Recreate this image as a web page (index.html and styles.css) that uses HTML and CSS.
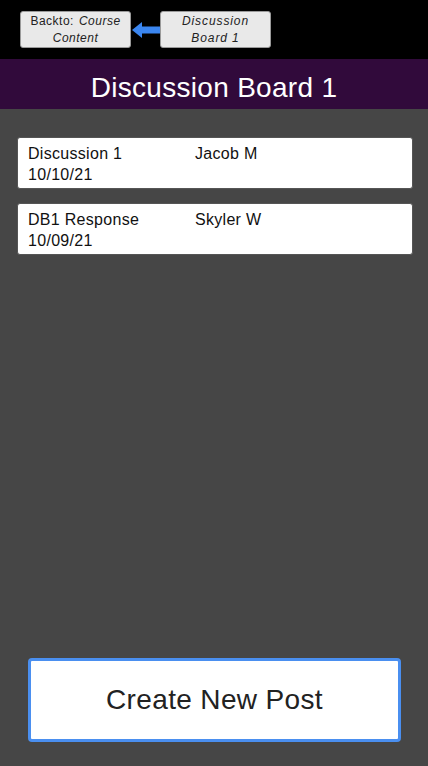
FILE: index.html
```html
<!DOCTYPE html>
<html>
<head>
<meta charset="utf-8">
<link rel="stylesheet" href="styles.css">
</head>
<body>
<div class="app">
  <header class="topbar">
    <div class="crumb crumb-back"><span>Backto:</span><i class="course">Course</i><br><i>Content</i></div>
    <svg class="arrow" width="29" height="18" viewBox="0 0 29 18"><path d="M0 9 L10 1 L10 5.5 L29 5.5 L29 12.5 L10 12.5 L10 17 Z" fill="#3b86f0"/></svg>
    <div class="crumb"><i>Discussion</i><br><i>Board 1</i></div>
  </header>
  <div class="titlebar">Discussion Board 1</div>
  <main class="content">
    <div class="card">
      <div class="row"><span class="name">Discussion 1</span><span>Jacob M</span></div>
      <div>10/10/21</div>
    </div>
    <div class="card">
      <div class="row"><span class="name">DB1 Response</span><span>Skyler W</span></div>
      <div>10/09/21</div>
    </div>
  </main>
  <div class="footer">
    <button class="create">Create New Post</button>
  </div>
</div>
</body>
</html>
```
FILE: styles.css
```css
html, body { margin: 0; padding: 0; }
body { font-family: "Liberation Sans", Arial, sans-serif; background: #464646; }
.app { width: 428px; height: 766px; display: flex; flex-direction: column; background: #464646; }
.topbar { height: 59px; background: #000; display: flex; align-items: flex-start; padding: 11px 0 0 20px; box-sizing: border-box; }
.crumb { width: 111px; height: 37px; box-sizing: border-box; background: #e9e9e9; border: 1px solid #9a9a9a; border-radius: 3px; font-size: 12px; letter-spacing: 0.9px; line-height: 17px; text-align: center; color: #222; padding: 1px 4px 0; }
.crumb-back { letter-spacing: 0.5px; }
.crumb-back .course { margin-left: 5px; }
.arrow { margin: 10px 0 0 1px; display: block; flex: none; }
.crumb + .arrow + .crumb { margin-left: -1px; }
.titlebar { height: 50px; background: #310a3b; color: #fff; font-size: 28px; letter-spacing: 0.3px; text-align: center; line-height: 57px; }
.content { flex: 1; padding: 28px 15px 0 17px; display: flex; flex-direction: column; gap: 14px; }
.card { background: #fff; border: 1px solid #555; border-radius: 3px; height: 52px; box-sizing: border-box; padding: 5px 10px 0; font-size: 16px; letter-spacing: 0.3px; line-height: 21px; color: #111; }
.row { display: flex; }
.name { width: 167px; }
.footer { padding: 0 27px 24px 28px; }
.create { width: 373px; height: 84px; box-sizing: border-box; background: #fff; border: 3px solid #4a8ff0; border-radius: 4px; font-family: "Liberation Sans", Arial, sans-serif; font-size: 28px; letter-spacing: 0.35px; color: #222; display: block; padding: 0; }
```
